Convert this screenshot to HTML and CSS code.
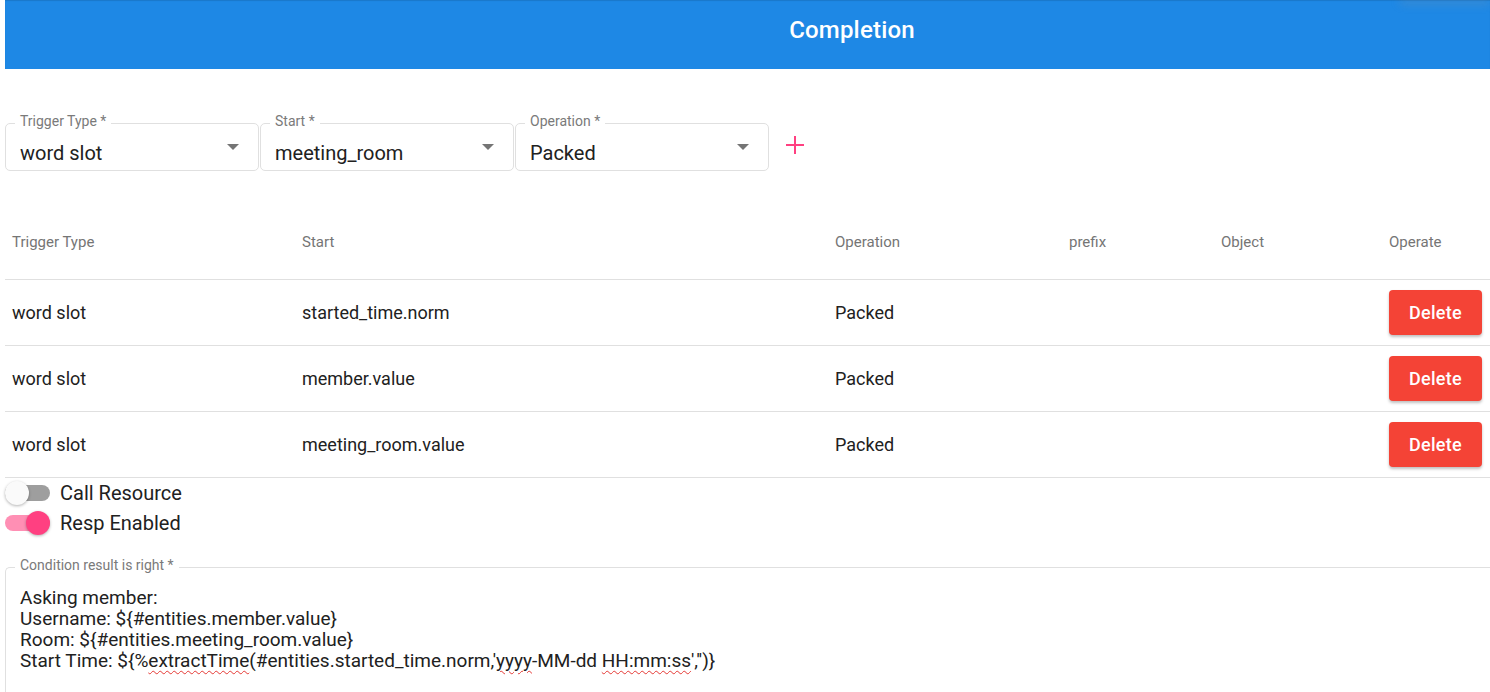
FILE: index.html
```html
<!DOCTYPE html>
<html lang="en">
<head>
<meta charset="utf-8">
<title>Completion</title>
<link rel="stylesheet" href="styles.css">
</head>
<body>
<div class="page">
  <header class="topbar">
    <h1 class="title">Completion</h1>
    <div class="topbar-shade"></div>
  </header>

  <section class="filters">
    <div class="select">
      <span class="select-label">Trigger Type *</span>
      <span class="select-value">word slot</span>
      <span class="caret"></span>
    </div>
    <div class="select">
      <span class="select-label">Start *</span>
      <span class="select-value">meeting_room</span>
      <span class="caret"></span>
    </div>
    <div class="select">
      <span class="select-label">Operation *</span>
      <span class="select-value">Packed</span>
      <span class="caret"></span>
    </div>
    <button class="add-btn" aria-label="add">
      <svg width="18" height="18" viewBox="0 0 18 18"><path d="M9 0V18M0 9H18" stroke="#FF4081" stroke-width="2" fill="none"/></svg>
    </button>
  </section>

  <section class="table">
    <div class="row head">
      <div class="cell">Trigger Type</div>
      <div class="cell">Start</div>
      <div class="cell">Operation</div>
      <div class="cell">prefix</div>
      <div class="cell">Object</div>
      <div class="cell">Operate</div>
    </div>
    <div class="row">
      <div class="cell">word slot</div>
      <div class="cell">started_time.norm</div>
      <div class="cell">Packed</div>
      <div class="cell"></div>
      <div class="cell"></div>
      <div class="cell"><button class="del-btn">Delete</button></div>
    </div>
    <div class="row">
      <div class="cell">word slot</div>
      <div class="cell">member.value</div>
      <div class="cell">Packed</div>
      <div class="cell"></div>
      <div class="cell"></div>
      <div class="cell"><button class="del-btn">Delete</button></div>
    </div>
    <div class="row">
      <div class="cell">word slot</div>
      <div class="cell">meeting_room.value</div>
      <div class="cell">Packed</div>
      <div class="cell"></div>
      <div class="cell"></div>
      <div class="cell"><button class="del-btn">Delete</button></div>
    </div>
  </section>

  <section class="toggles">
    <label class="toggle-row">
      <span class="switch off"><span class="track"></span><span class="thumb"></span></span>
      <span class="toggle-label">Call Resource</span>
    </label>
    <label class="toggle-row">
      <span class="switch on"><span class="track"></span><span class="thumb"></span></span>
      <span class="toggle-label">Resp Enabled</span>
    </label>
  </section>

  <section class="textarea">
    <span class="textarea-label">Condition result is right *</span>
    <div class="textarea-body">
      <div>Asking member:</div>
      <div>Username: ${#entities.member.value}</div>
      <div>Room: ${#entities.meeting_room.value}</div>
      <div>Start Time: ${%<span class="spell">extractTime</span>(#entities.started_time.norm,'<span class="spell">yyyy</span>-MM-dd <span class="spell">HH:mm:ss</span>','')}</div>
    </div>
  </section>
</div>
</body>
</html>
```

FILE: styles.css
```css
* { box-sizing: border-box; }
html, body { margin: 0; padding: 0; background: #fff; }
body {
  font-family: Roboto, "Liberation Sans", Arial, sans-serif;
  color: #212121;
  overflow: hidden;
}
.page {
  padding-left: 5px;
  height: 692px;
  overflow: hidden;
}

.topbar {
  position: relative;
  height: 69px;
  background: #1E88E5;
  display: flex;
  align-items: center;
  justify-content: center;
  padding-left: 209px;
  box-shadow: inset 0 1px 1px rgba(0,0,0,0.12);
}
.title {
  margin: 0;
  font-size: 24px;
  font-weight: 500;
  color: #fff;
  letter-spacing: 0.2px;
  position: relative;
  top: -5px;
}
.topbar-shade {
  position: absolute;
  right: 0;
  top: 0;
  width: 90px;
  height: 4px;
  background: rgba(150,150,150,0.35);
  filter: blur(4px);
}

.filters {
  display: flex;
  align-items: center;
  gap: 1px;
  margin-top: 54px;
  height: 48px;
}
.select {
  position: relative;
  width: 254px;
  height: 48px;
  border: 1px solid #e0e0e0;
  border-radius: 5px;
  display: flex;
  align-items: center;
  padding: 0 19px 0 14px;
}
.select-label {
  position: absolute;
  left: 9px;
  top: -11px;
  padding: 0 5px;
  background: #fff;
  font-size: 14px;
  line-height: 16px;
  color: #7a7a7a;
}
.select-value {
  flex: 1;
  font-size: 20px;
  line-height: 24px;
  margin-top: 12px;
  color: #212121;
}
.caret {
  width: 0;
  height: 0;
  border-left: 6px solid transparent;
  border-right: 6px solid transparent;
  border-top: 6px solid #757575;
}
.add-btn {
  margin-left: 16px;
  margin-top: -4px;
  padding: 0;
  border: 0;
  background: transparent;
  width: 18px;
  height: 18px;
  display: flex;
}

.table { margin-top: 34px; }
.row {
  display: grid;
  grid-template-columns: 290px 533px 234px 152px 168px 1fr;
  height: 66px;
  align-items: center;
  border-bottom: 1px solid #e0e0e0;
  font-size: 18px;
  color: #212121;
}
.row.head {
  height: 75px;
  font-size: 15px;
  color: #757575;
}
.cell { padding-left: 7px; }
.del-btn {
  width: 93px;
  height: 45px;
  border: 0;
  border-radius: 4px;
  background: #F44336;
  color: #fff;
  font-family: Roboto, "Liberation Sans", Arial, sans-serif;
  font-size: 18px;
  font-weight: 500;
  letter-spacing: 0.3px;
  box-shadow: 0 2px 3px rgba(0,0,0,0.25);
  display: block;
}

.toggles { display: flex; flex-direction: column; }
.toggle-row {
  display: flex;
  align-items: center;
  height: 30px;
}
.switch {
  position: relative;
  width: 46px;
  height: 24px;
  display: flex;
  align-items: center;
}
.track {
  width: 45px;
  height: 16px;
  border-radius: 8px;
}
.thumb {
  position: absolute;
  top: 0;
  width: 24px;
  height: 24px;
  border-radius: 50%;
  box-shadow: 0 1px 3px rgba(0,0,0,0.3);
}
.switch.off .track { background: #9e9e9e; }
.switch.off .thumb { left: 0; background: #fafafa; }
.switch.on .track { background: #ff8fb4; }
.switch.on .thumb { left: 21px; background: #FF4081; }
.toggle-label {
  margin-left: 9px;
  font-size: 20px;
  color: #212121;
}

.textarea {
  position: relative;
  margin-top: 29px;
  height: 160px;
  border: 1px solid #e0e0e0;
  border-right: 0;
  border-radius: 5px 0 0 0;
}
.textarea-label {
  position: absolute;
  left: 9px;
  top: -11px;
  padding: 0 5px;
  background: #fff;
  font-size: 14px;
  line-height: 16px;
  color: #7a7a7a;
}
.textarea-body {
  padding: 19px 0 0 14px;
  font-size: 19px;
  line-height: 21px;
  color: #212121;
}
.spell {
  text-decoration: underline wavy #e53935;
  text-decoration-thickness: 1px;
  text-underline-offset: 3px;
}
```
